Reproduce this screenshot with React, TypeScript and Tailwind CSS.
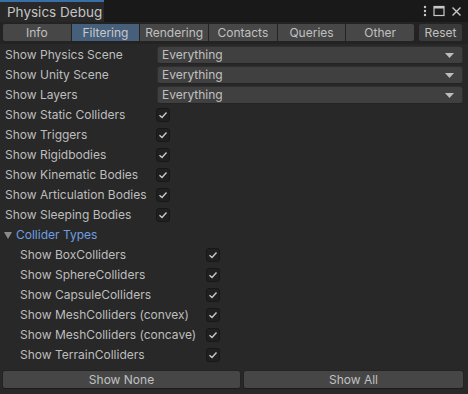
import { useState } from "react";

const font = { fontFamily: "Inter, 'Noto Sans', sans-serif" };

const tabs = ["Info", "Filtering", "Rendering", "Contacts", "Queries", "Other"];

const dropdowns = ["Show Physics Scene", "Show Unity Scene", "Show Layers"];

const toggles = [
  "Show Static Colliders",
  "Show Triggers",
  "Show Rigidbodies",
  "Show Kinematic Bodies",
  "Show Articulation Bodies",
  "Show Sleeping Bodies",
];

const colliders = [
  "Show BoxColliders",
  "Show SphereColliders",
  "Show CapsuleColliders",
  "Show MeshColliders (convex)",
  "Show MeshColliders (concave)",
  "Show TerrainColliders",
];

function Check({ on, onClick }: { on: boolean; onClick: () => void }) {
  return (
    <button
      onClick={onClick}
      className="w-[14px] h-[14px] rounded-[3px] bg-[#202020] border border-[#171717] flex items-center justify-center"
    >
      {on && (
        <svg width="10" height="10" viewBox="0 0 10 10">
          <path d="M1.5 5.2 L4 7.5 L8.5 2.5" fill="none" stroke="#c8c8c8" strokeWidth="1.4" />
        </svg>
      )}
    </button>
  );
}

function Dropdown() {
  return (
    <div className="flex-1 h-[18px] rounded-[3px] bg-[#404040] border border-[#2f2f2f] border-b-[#242424] flex items-center justify-between pl-[4px] pr-[8px] text-[#c0c0c0]">
      <span>Everything</span>
      <svg width="9" height="5" viewBox="0 0 9 5">
        <path d="M0 0 H9 L4.5 5 Z" fill="#bdbdbd" />
      </svg>
    </div>
  );
}

export default function App() {
  const [active, setActive] = useState(1);
  const [flags, setFlags] = useState<boolean[]>(toggles.map(() => true));
  const [colFlags, setColFlags] = useState<boolean[]>(colliders.map(() => true));
  const [open, setOpen] = useState(true);

  return (
    <div className="w-[468px] h-[394px] bg-[#282828] flex flex-col text-[12px] text-[#bebebe] overflow-hidden" style={font}>
      {/* Title bar */}
      <div className="h-[22px] bg-[#191919] flex items-stretch">
        <div className="w-[104px] bg-[#282828] border-t-2 border-[#3a6ea6] flex items-center pl-[7px] text-[#c4c4c4] text-[13.5px] whitespace-nowrap">
          Physics Debug
        </div>
        <div className="flex-1" />
        <div className="flex items-center gap-[6px] pr-[6px]">
          <svg width="4" height="14" viewBox="0 0 4 14">
            <circle cx="2" cy="3" r="1.2" fill="#c8c8c8" />
            <circle cx="2" cy="7" r="1.2" fill="#c8c8c8" />
            <circle cx="2" cy="11" r="1.2" fill="#c8c8c8" />
          </svg>
          <svg width="12" height="12" viewBox="0 0 12 12">
            <rect x="1" y="1.5" width="10" height="9" fill="none" stroke="#c8c8c8" strokeWidth="1.2" />
            <rect x="1" y="1.5" width="10" height="2" fill="#c8c8c8" />
          </svg>
          <svg width="11" height="11" viewBox="0 0 11 11">
            <path d="M1.5 1.5 L9.5 9.5 M9.5 1.5 L1.5 9.5" stroke="#c8c8c8" strokeWidth="1.4" />
          </svg>
        </div>
      </div>

      {/* Toolbar */}
      <div className="h-[22px] bg-[#232323] flex items-center px-[2px] pb-[1px]">
        <div className="flex w-[413px] h-[19px]">
          {tabs.map((t, i) => (
            <button
              key={t}
              onClick={() => setActive(i)}
              className={`flex-1 flex items-center justify-center border border-[#232323] -ml-px first:ml-0 first:rounded-l-[3px] last:rounded-r-[3px] ${
                i === active ? "bg-[#46607c] text-[#c8c8c8]" : "bg-[#474747] text-[#c0c0c0]"
              }`}
            >
              {t}
            </button>
          ))}
        </div>
        <button className="ml-[3px] w-[45px] h-[19px] bg-[#3a3a3a] border border-[#232323] rounded-[3px] text-[#c0c0c0]">
          Reset
        </button>
      </div>

      {/* Content */}
      <div className="flex-1 flex flex-col pt-[1px] px-[5px]">
        {dropdowns.map((d) => (
          <div key={d} className="h-[20px] flex items-center">
            <span className="w-[152px]">{d}</span>
            <Dropdown />
          </div>
        ))}
        {toggles.map((t, i) => (
          <div key={t} className="h-[20px] flex items-center">
            <span className="w-[151px]">{t}</span>
            <Check on={flags[i]} onClick={() => setFlags(flags.map((f, j) => (j === i ? !f : f)))} />
          </div>
        ))}
        <button onClick={() => setOpen(!open)} className="h-[20px] flex items-center -ml-[1px] text-[#6f9fe0]">
          <svg width="8" height="7" viewBox="0 0 8 7" className={open ? "" : "-rotate-90"}>
            <path d="M0 0 H8 L4 7 Z" fill="#8a8a8a" />
          </svg>
          <span className="ml-[4px]">Collider Types</span>
        </button>
        {open &&
          colliders.map((c, i) => (
            <div key={c} className="h-[20px] flex items-center pl-[15px]">
              <span className="w-[186px]">{c}</span>
              <Check on={colFlags[i]} onClick={() => setColFlags(colFlags.map((f, j) => (j === i ? !f : f)))} />
            </div>
          ))}
      </div>

      <div className="flex gap-[2px] px-[2px] pb-[5px]">
        <button className="w-[239px] h-[19px] bg-[#464646] border border-[#232323] border-b-[#1c1c1c] rounded-[3px] text-[#c0c0c0]">
          Show None
        </button>
        <button className="w-[221px] h-[19px] bg-[#464646] border border-[#232323] border-b-[#1c1c1c] rounded-[3px] text-[#c0c0c0]">
          Show All
        </button>
      </div>
    </div>
  );
}
